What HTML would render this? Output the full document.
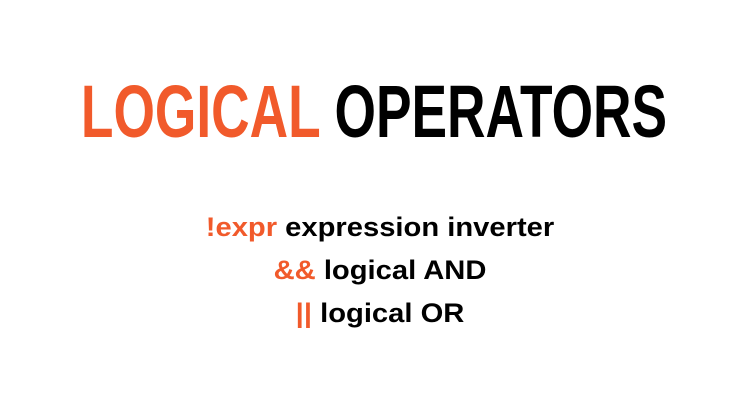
<!DOCTYPE html>
<html><head><style>
body{margin:0;width:736px;height:406px;background:#fff;overflow:hidden;font-family:"Liberation Sans",sans-serif;font-weight:bold;color:#000}
.o{color:#f15a2b}
.w{position:absolute;white-space:nowrap}
.t{left:374px;top:72px;font-size:74px;line-height:80px;transform:translateX(-50%) scaleX(0.72)}
.l{left:380px;font-size:27px;line-height:30px;transform:translateX(-50%) scaleX(1.08)}
</style></head><body>
<div class="w t"><span class="o">LOGICAL</span> OPERATORS</div>
<div class="w l" style="top:212px"><span class="o">!expr</span> expression inverter</div>
<div class="w l" style="top:255px"><span class="o">&amp;&amp;</span> logical AND</div>
<div class="w l" style="top:298px"><span class="o">||</span> logical OR</div>
</body></html>
